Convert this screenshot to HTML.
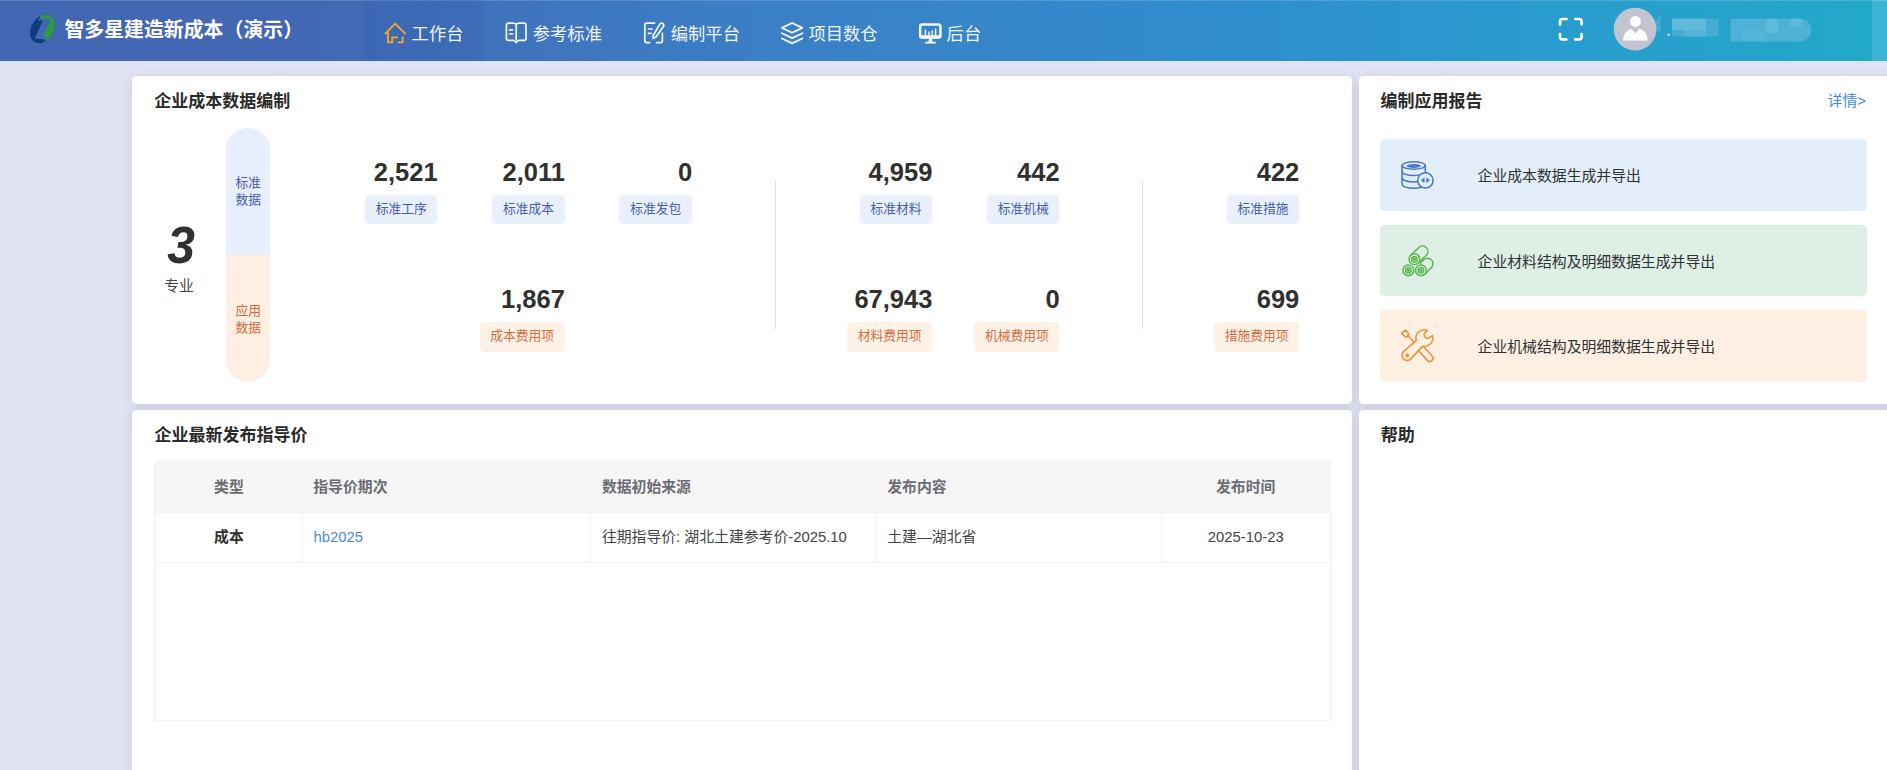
<!DOCTYPE html>
<html lang="zh-CN">
<head>
<meta charset="utf-8">
<title>智多星建造新成本（演示）</title>
<style>
*{box-sizing:border-box;margin:0;padding:0}
html,body{width:1887px;height:770px;overflow:hidden}
body{position:relative;background:#e0e3f3;font-family:"Liberation Sans","Noto Sans CJK SC",sans-serif;color:#333;-webkit-font-smoothing:antialiased}
.abs{position:absolute;white-space:nowrap}
/* header */
#hd{position:absolute;left:0;top:0;width:1887px;height:61px;background:linear-gradient(90deg,#4366b2 0px,#4267b3 300px,#3f74bd 520px,#3b7fc6 760px,#3686ca 1000px,#2f8ece 1250px,#2a9ace 1500px,#25a3cb 1750px,#22a8c9 1872px,#3db4d4 1872px,#3db4d4 1887px)}
#hd:before{content:"";position:absolute;left:0;top:0;width:100%;height:1.4px;background:rgba(255,255,255,.16)}
#hd .active{position:absolute;left:363px;top:0;width:120.5px;height:61px;background:rgba(40,80,170,.13)}
#logoText{left:64.4px;top:15.2px;line-height:30px;font-size:19.9px;font-weight:700;color:#fff;letter-spacing:0}
.nav{top:18.9px;line-height:30px;font-size:17.3px;color:#f0f5fc;font-weight:400}
.ico{position:absolute;overflow:visible}
/* panels */
.panel{position:absolute;background:#fff;border-radius:4.5px;box-shadow:0 2.1px 12.75px rgba(0,0,0,.1)}
.ptitle{font-size:17px;font-weight:700;color:#2a2a2a;line-height:24px}
/* stats */
.num{font-size:25.5px;font-weight:700;color:#303030;line-height:30px;text-align:right}
.tag{position:absolute;height:29.6px;line-height:28px;border-radius:4.5px;font-size:12.75px;text-align:center;white-space:nowrap}
.tag.b{background:#e8f0fb;color:#4a5cb0}
.tag.o{background:#fef2e7;color:#d56d3e}
.vline{position:absolute;width:1px;background:#dcdfe6;top:180.5px;height:148.5px}
/* cards */
.card{position:absolute;left:1380px;width:487.3px;height:71.8px;border-radius:4.5px}
.card span{position:absolute;left:97.6px;top:21.5px;line-height:30px;font-size:14.85px;color:#303133;white-space:nowrap}
/* table */
#tb{position:absolute;left:153.9px;top:461px;width:1177.6px;height:260.1px;border:1px solid #f0f2f6;background:#fff}
#tb .hd{position:absolute;left:0;top:0;width:1175.6px;height:51px;background:#f6f6f6;border-bottom:1px solid #f0f2f6}
#tb .rw{position:absolute;left:0;top:51px;width:1175.6px;height:49.8px;border-bottom:1px solid #f0f2f6}
#tb .cl{position:absolute;top:0;width:1px;height:100.6px;background:#f0f2f6}
.th{font-size:14.85px;font-weight:700;color:#6a6d73;line-height:30px}
.td{font-size:14.85px;color:#444;line-height:30px}
</style>
</head>
<body>
<div id="hd">
  <div class="active"></div>
  <svg class="ico" style="left:0;top:0" width="1887" height="61" viewBox="0 0 1887 61" fill="none">
    <!-- logo -->
    <defs><clipPath id="lg"><ellipse cx="42.43" cy="28.86" rx="11" ry="15.3" transform="rotate(32 42.43 28.86)"/></clipPath></defs>
    <g clip-path="url(#lg)">
      <rect x="25" y="8" width="36" height="42" fill="#0c3d7c"/>
      <polygon points="40,8 62,8 62,50 44.6,50 45,39.6 42,37 50.2,19.2 40,19.2" fill="#2f9a45"/>
      <polygon points="38.6,18.4 50.6,18.8 42.8,36.4 46.4,37.2 45.4,39.6 34.6,38.4 42.9,20.8 38.3,20.4" fill="#4367b2"/>
    </g>
    <!-- home -->
    <g stroke="#f5a623" stroke-width="1.9" stroke-linejoin="miter" stroke-linecap="butt">
      <path d="M384.9 34.1 L395.2 23.6 L405.6 34.1"/>
      <path d="M388 32.2 V42.4 H392.2 V37.4 H398"/>
      <path d="M397.6 42.4 H402.6 V36.4"/>
    </g>
    <!-- book -->
    <g stroke="#f4f8fd" stroke-width="1.7" stroke-linejoin="round" stroke-linecap="round">
      <path d="M516.2 24.6 V39.6"/>
      <path d="M516.2 24.6 C515.6 23.6 514.6 23.1 513.2 23.1 H508.6 C507.3 23.1 506.4 24 506.4 25.3 V38.6 C506.4 39.6 507.2 40.4 508.3 40.4 H513.4 C514.6 40.4 515.6 41.2 516.2 42.6 C516.8 41.2 517.8 40.4 519 40.4 H524.1 C525.2 40.4 526 39.6 526 38.6 V25.3 C526 24 525.1 23.1 523.8 23.1 H519.2 C517.8 23.1 516.8 23.6 516.2 24.6Z"/>
      <path d="M509.6 29.8 H512.6 M509.6 34 H512.6"/>
    </g>
    <!-- edit -->
    <g stroke="#f4f8fd" stroke-width="1.7" stroke-linejoin="round" stroke-linecap="round">
      <path d="M654.5 23.2 H646.6 C645.5 23.2 644.8 24 644.8 25 V40.8 C644.8 41.9 645.5 42.6 646.6 42.6 H649.6"/>
      <path d="M656.6 42.6 H660.6 C661.7 42.6 662.4 41.9 662.4 40.8 V33.4"/>
      <path d="M648.4 29 H652 M648.4 33.4 H651"/>
      <path d="M660.2 23.6 C661.2 22.9 662.5 23.1 663.2 24 C663.9 24.9 663.8 26.2 663 26.9 L656 37 L653 38.4 L653.2 35.2 Z"/>
    </g>
    <!-- layers -->
    <g stroke="#f4f8fd" stroke-width="1.8" stroke-linejoin="round" stroke-linecap="round">
      <path d="M792.1 23 L802.4 27.9 L792.1 32.8 L781.9 27.9 Z"/>
      <path d="M781.9 33.2 L792.1 38.1 L802.4 33.2"/>
      <path d="M781.9 38.5 L792.1 43.4 L802.4 38.5"/>
    </g>
    <!-- monitor -->
    <g>
      <rect x="920.2" y="24.6" width="20.2" height="12.8" rx="1.8" stroke="#f4f8fd" stroke-width="2.5"/>
      <rect x="919.2" y="35.2" width="22.2" height="3.2" rx="1.4" fill="#f4f8fd"/>
      <path d="M925.4 29.4 V35.5 M929 31.6 V35.5 M932.3 30.4 V35.5 M935.6 28.6 V35.5" stroke="#f4f8fd" stroke-width="1.5"/>
      <path d="M929.2 38 H931.8 L932.6 41.8 H935.8 V43.4 H925.2 V41.8 H928.4 Z" fill="#f4f8fd"/>
    </g>
    <!-- fullscreen -->
    <g stroke="#fff" stroke-width="2.7" stroke-linecap="round" stroke-linejoin="round">
      <path d="M1560 24.4 V21.6 Q1560 19 1562.6 19 H1566.4"/>
      <path d="M1575.2 19 H1579 Q1581.6 19 1581.6 21.6 V24.4"/>
      <path d="M1560 34 V36.8 Q1560 39.4 1562.6 39.4 H1566.4"/>
      <path d="M1575.2 39.4 H1579 Q1581.6 39.4 1581.6 36.8 V34"/>
    </g>
    <!-- avatar -->
    <circle cx="1635.1" cy="29.05" r="21.4" fill="#c2c5cf"/>
    <circle cx="1635.4" cy="21.4" r="5.4" fill="#fff"/>
    <path d="M1623 40.4 C1623.6 34 1626.4 30.4 1631.4 28.8 L1635.4 33.6 L1639.4 28.8 C1644.4 30.4 1647.2 34 1647.8 40.4 Z" fill="#fff"/>
    <!-- blurred user name -->
    <g>
      <path d="M1656 21 L1660.5 14 V32 L1656 30 Z" fill="#8fcfe4" opacity=".28"/>
      <rect x="1672" y="18.8" width="46.5" height="17.6" fill="#48aed4" opacity=".9"/>
      <rect x="1672" y="18.8" width="34" height="11.4" fill="#62badb"/>
      <rect x="1684" y="30" width="22" height="6.4" fill="#55b4d8"/>
      <path d="M1730.4 18.8 H1800 A11.3 11.3 0 0 1 1800 41.4 H1730.4 Z" fill="#4eb1d6"/>
      <rect x="1766" y="18.8" width="12" height="14" fill="#5ebadb"/>
      <rect x="1790" y="18.8" width="12" height="8" fill="#5ebadb"/>
      <rect x="1742" y="30" width="24" height="11.4" fill="#55b5d8"/>
      <rect x="1667.6" y="33.8" width="2" height="1.8" fill="#e8f6fb"/>
    </g>
  </svg>
  <div class="abs" id="logoText">智多星建造新成本（演示）</div>
  <div class="abs nav" style="left:411.6px">工作台</div>
  <div class="abs nav" style="left:532.8px">参考标准</div>
  <div class="abs nav" style="left:670.8px">编制平台</div>
  <div class="abs nav" style="left:808.4px">项目数仓</div>
  <div class="abs nav" style="left:946.6px">后台</div>
</div>
<div class="panel" style="left:132.3px;top:76.2px;width:1220.2px;height:327.6px"></div>
<div class="panel" style="left:1359px;top:76.2px;width:540px;height:327.6px"></div>
<div class="panel" style="left:132.3px;top:410px;width:1220.2px;height:380px"></div>
<div class="panel" style="left:1359px;top:410px;width:540px;height:380px"></div>
<div class="abs ptitle" style="left:154.2px;top:90px">企业成本数据编制</div>
<div class="abs ptitle" style="left:1380.6px;top:90px">编制应用报告</div>
<div class="abs ptitle" style="left:154.4px;top:424px">企业最新发布指导价</div>
<div class="abs ptitle" style="left:1380.8px;top:424px">帮助</div>
<div class="abs" style="left:1827.6px;top:86px;line-height:30px;font-size:14.85px;color:#3f8be0">详情&gt;</div>
<div class="abs" style="left:165px;top:215px;width:32px;text-align:center;line-height:60px;font-size:52.4px;font-weight:700;font-style:italic;color:#303030;transform:scaleX(.95)">3</div>
<div class="abs" style="left:159px;top:271px;width:40px;text-align:center;line-height:30px;font-size:14.85px;color:#444">专业</div>
<div style="position:absolute;left:226.3px;top:127.6px;width:44px;height:254.6px;border-radius:22px;overflow:hidden;background:#fdf0e3"><div style="height:127.4px;background:#e6effb"></div></div>
<div class="abs" style="left:226.3px;top:175px;width:44px;text-align:center;font-size:12.75px;line-height:16.6px;color:#4a5cb0;white-space:normal;padding:0 8px">标准数据</div>
<div class="abs" style="left:226.3px;top:303.4px;width:44px;text-align:center;font-size:12.75px;line-height:16.6px;color:#d26a3c;white-space:normal;padding:0 8px">应用数据</div>
<div class="abs num" style="left:317.6px;top:156.5px;width:120px">2,521</div>
<div class="tag b" style="left:364.9px;top:194.5px;width:72.6px">标准工序</div>
<div class="abs num" style="left:444.9px;top:156.5px;width:120px">2,011</div>
<div class="tag b" style="left:492.2px;top:194.5px;width:72.6px">标准成本</div>
<div class="abs num" style="left:572.1px;top:156.5px;width:120px">0</div>
<div class="tag b" style="left:619.4px;top:194.5px;width:72.6px">标准发包</div>
<div class="abs num" style="left:812.4px;top:156.5px;width:120px">4,959</div>
<div class="tag b" style="left:859.7px;top:194.5px;width:72.6px">标准材料</div>
<div class="abs num" style="left:939.6px;top:156.5px;width:120px">442</div>
<div class="tag b" style="left:986.9px;top:194.5px;width:72.6px">标准机械</div>
<div class="abs num" style="left:1179.3px;top:156.5px;width:120px">422</div>
<div class="tag b" style="left:1226.6px;top:194.5px;width:72.6px">标准措施</div>
<div class="abs num" style="left:444.9px;top:283.8px;width:120px">1,867</div>
<div class="tag o" style="left:479.6px;top:322.2px;width:85.2px">成本费用项</div>
<div class="abs num" style="left:812.4px;top:283.8px;width:120px">67,943</div>
<div class="tag o" style="left:847.1px;top:322.2px;width:85.2px">材料费用项</div>
<div class="abs num" style="left:939.6px;top:283.8px;width:120px">0</div>
<div class="tag o" style="left:974.3px;top:322.2px;width:85.2px">机械费用项</div>
<div class="abs num" style="left:1179.3px;top:283.8px;width:120px">699</div>
<div class="tag o" style="left:1214.0px;top:322.2px;width:85.2px">措施费用项</div>
<div class="vline" style="left:774.6px"></div>
<div class="vline" style="left:1141.6px"></div>
<div class="card" style="top:138.8px;height:72.4px;background:#e3eef9"><span style="top:22.4px">企业成本数据生成并导出</span></div>
<div class="card" style="top:224.8px;height:70.8px;background:#deefe6"><span style="top:22.2px">企业材料结构及明细数据生成并导出</span></div>
<div class="card" style="top:310.3px;height:71.6px;background:#fdf0e2"><span style="top:21.4px">企业机械结构及明细数据生成并导出</span></div>
<svg class="ico" style="left:1390px;top:130px" width="60" height="250" viewBox="1390 130 60 250" fill="none">
  <!-- database -->
  <g stroke="#4878c8" stroke-width="1.5" stroke-linecap="round" stroke-linejoin="round">
    <ellipse cx="1413.7" cy="165.5" rx="11.6" ry="3.7"/>
    <ellipse cx="1413.7" cy="165.9" rx="7.2" ry="2" fill="#4878c8" stroke="none"/>
    <path d="M1402.1 165.6 V184.2 C1402.1 186.6 1407.2 188.3 1413.7 188.3 C1416.4 188.3 1418.9 188 1420.9 187.5"/>
    <path d="M1425.3 165.6 V172.6"/>
    <path d="M1402.1 171.4 C1402.1 173.8 1407.2 175.5 1413.7 175.5 C1417.6 175.5 1421 174.9 1423.2 173.8"/>
    <path d="M1402.1 177.8 C1402.1 180.2 1407.2 181.9 1413.7 181.9 C1415.2 181.9 1416.6 181.8 1417.9 181.6"/>
    <circle cx="1425.4" cy="180.4" r="7.7" fill="#e3eef9"/>
    <path d="M1424.1 178.4 V182.4 L1421.6 180.4 Z M1426.7 178.4 V182.4 L1429.2 180.4 Z" fill="#4878c8" stroke-width=".8"/>
  </g>
  <!-- rolls -->
  <g stroke="#57b74a" stroke-width="1.45" stroke-linecap="round" stroke-linejoin="round">
    <path d="M1410.7 255.2 L1419.2 247.2 A5.4 5.4 0 0 1 1426.6 255 L1419.4 261.8"/>
    <path d="M1420.2 263.4 L1423.7 259.8 A5.4 5.4 0 0 1 1431.5 267.4 L1424.9 274.2"/>
    <circle cx="1414.4" cy="259.2" r="5.4"/><circle cx="1414.4" cy="259.2" r="2.8"/><circle cx="1414.4" cy="259.2" r=".9" fill="#57b74a"/>
    <circle cx="1408.3" cy="270.3" r="5.4"/><circle cx="1408.3" cy="270.3" r="2.8"/><circle cx="1408.3" cy="270.3" r=".9" fill="#57b74a"/>
    <circle cx="1420.9" cy="270.3" r="5.4"/><circle cx="1420.9" cy="270.3" r="2.8"/><circle cx="1420.9" cy="270.3" r=".9" fill="#57b74a"/>
  </g>
  <!-- tools -->
  <g stroke="#f0913a" stroke-width="1.6" stroke-linecap="round" stroke-linejoin="round">
    <path d="M1401.6 333.4 L1405.4 330 L1408.8 333.6 L1407.4 336.8 L1404.8 336.6 Z"/>
    <path d="M1407.8 335.6 L1414.2 342"/>
    <path d="M1424.3 347.2 L1432.1 356 A3.2 3.2 0 0 1 1427.3 360.4 L1419.3 351.4"/>
    <path d="M1416.2 340.4 C1415.2 336.4 1416.4 333.4 1419.4 331.4 C1421.8 329.8 1424.6 329.6 1427.4 330.4 L1424.2 333.8 C1423.6 336.4 1425.8 338.6 1428.6 338.2 L1432.4 335.6 C1433.4 338.6 1432.8 341.6 1430.6 343.8 C1428.4 346 1425.4 346.8 1422.4 346.4 L1411.2 358.6 C1409 361 1405.4 361 1403.4 358.8 C1401.4 356.6 1401.6 353.4 1403.8 351.4 Z"/>
    <circle cx="1407.2" cy="355.6" r="1.2" fill="#f0913a"/>
  </g>
</svg>
<div id="tb">
  <div class="hd"></div><div class="rw"></div>
  <div class="cl" style="left:147.4px"></div><div class="cl" style="left:435.4px"></div><div class="cl" style="left:721.6px"></div><div class="cl" style="left:1006.2px"></div>
  <div class="abs th" style="left:0;width:148px;text-align:center;top:10.4px">类型</div>
  <div class="abs th" style="left:158.4px;top:10.4px">指导价期次</div>
  <div class="abs th" style="left:447px;top:10.4px">数据初始来源</div>
  <div class="abs th" style="left:732.4px;top:10.4px">发布内容</div>
  <div class="abs th" style="left:1005.8px;width:170px;text-align:center;top:10.4px">发布时间</div>
  <div class="abs td" style="left:0;width:148px;text-align:center;top:60.3px;font-weight:700;color:#303030">成本</div>
  <div class="abs td" style="left:158.6px;top:60.3px;color:#4a8bdb">hb2025</div>
  <div class="abs td" style="left:447px;top:60.3px">往期指导价: 湖北土建参考价-2025.10</div>
  <div class="abs td" style="left:732.4px;top:60.3px">土建—湖北省</div>
  <div class="abs td" style="left:1005.8px;width:170px;text-align:center;top:60.3px">2025-10-23</div>
</div>
</body>
</html>
